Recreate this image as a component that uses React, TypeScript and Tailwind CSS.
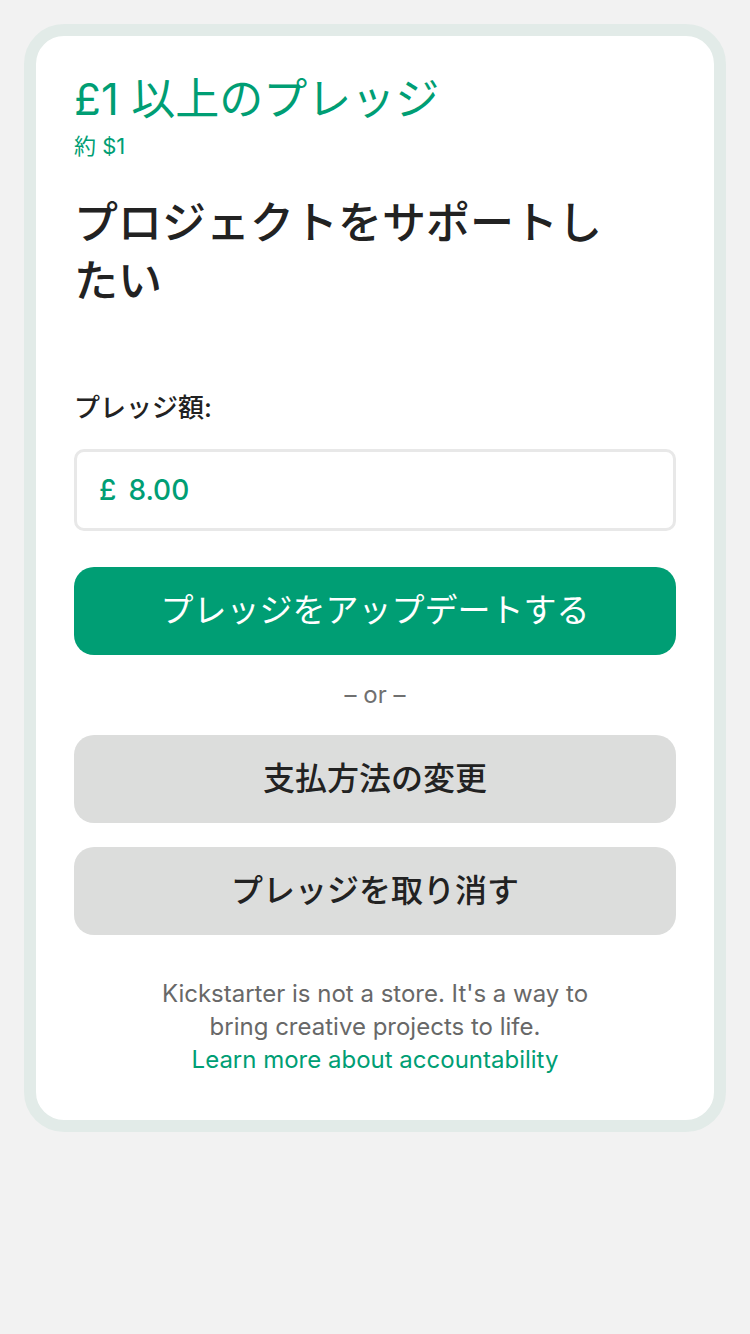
const font = { fontFamily: 'Inter, "Noto Sans CJK JP", sans-serif' };

export default function App() {
  return (
    <div className="min-h-[1334px] w-[750px] bg-[#f2f2f2] pt-6 px-6" style={font}>
      <div className="rounded-[40px] border-[12px] border-[#e2ebe8] bg-white">
        <div className="px-[38px] pt-[34px] pb-[44px]">
          <h2 className="text-[44px] leading-[58px] font-normal text-[#009e74]">
            £1 以上のプレッジ
          </h2>
          <p className="mt-[5px] text-[22px] leading-[26px] text-[#009e74]">約 $1</p>

          <h1 className="mt-[35px] w-[545px] text-[44px] leading-[58px] font-medium text-[#222222]">
            プロジェクトをサポートしたい
          </h1>

          <p className="mt-[80px] text-[26px] leading-[36px] font-medium text-[#222222]">
            プレッジ額:
          </p>

          <div className="mt-[23px] flex h-[82px] items-center rounded-[10px] border-[3px] border-[#e8e8e8] px-[22px]">
            <span className="text-[28px] font-medium text-[#009e74]">£</span>
            <span className="ml-[12px] text-[28px] font-medium text-[#009e74]">8.00</span>
          </div>

          <button className="mt-9 flex h-[88px] w-full items-center justify-center rounded-[20px] bg-[#009e74] text-[33px] font-normal text-white">
            プレッジをアップデートする
          </button>

          <p className="mt-[22px] text-center text-[24px] leading-[36px] text-[#707070]">– or –</p>

          <button className="mt-[22px] flex h-[88px] w-full items-center justify-center rounded-[20px] bg-[#dcdddc] text-[32px] font-medium text-[#222222]">
            支払方法の変更
          </button>

          <button className="mt-6 flex h-[88px] w-full items-center justify-center rounded-[20px] bg-[#dcdddc] text-[32px] font-medium text-[#222222]">
            プレッジを取り消す
          </button>

          <div className="mt-[42px] text-center text-[24px] leading-[33px] text-[#686868]">
            <p>Kickstarter is not a store. It's a way to</p>
            <p>bring creative projects to life.</p>
            <p className="text-[#009e74]">Learn more about accountability</p>
          </div>
        </div>
      </div>
    </div>
  );
}
